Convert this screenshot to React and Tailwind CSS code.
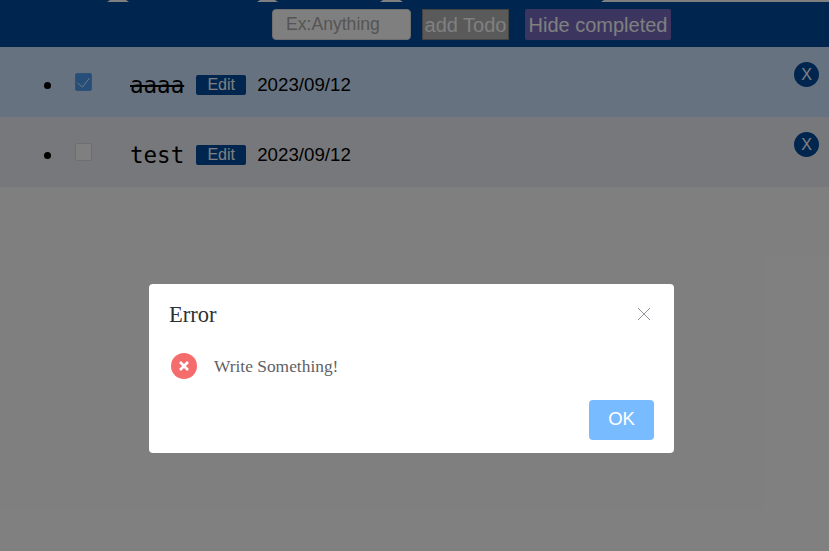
const todos = [
  { id: 1, title: "aaaa", done: true, date: "2023/09/12", row: "bg-[#cce4ff]" },
  { id: 2, title: "test", done: false, date: "2023/09/12", row: "bg-[#eef1f6]" },
];

function CheckIcon() {
  return (
    <svg width="14" height="14" viewBox="0 0 14 14" fill="none" stroke="white" strokeOpacity="0.8" strokeWidth="1">
      <path d="M0.5 8 L5.5 12 L12.5 3" />
    </svg>
  );
}

export default function App() {
  return (
    <div className="relative h-[551px] w-[829px] overflow-hidden bg-white font-['Liberation_Sans',sans-serif]">
      <div className="relative flex h-[47px] items-start justify-center gap-[11px] bg-[#004c9e] pl-[114px] pt-[9px]">
        <svg width="829" height="3" viewBox="0 0 829 3" fill="white" className="absolute left-0 top-0">
          <polygon points="110,0 126,0 129,2 107,2" />
          <polygon points="260,0 275,0 278,2 257,2" />
          <polygon points="383,0 400,0 403,2 380,2" />
          <polygon points="604,0 829,0 829,2 601,2" />
        </svg>
        <input
          placeholder="Ex:Anything"
          className="h-[31px] w-[139px] rounded-[4px] border border-[#ddd] bg-white px-[13px] text-[17.6px] placeholder:text-[#aaa]"
        />
        <div className="flex gap-4">
          <button className="h-[31px] w-[87px] border border-[#888] bg-[#b4b4b4] text-[20px] text-white">add Todo</button>
          <button className="h-[31px] w-[146px] rounded-[2px] bg-[#766ac0] text-[20px] text-white">Hide completed</button>
        </div>
      </div>
      <ul>
        {todos.map((todo) => (
          <li key={todo.id} className={`relative flex h-[70px] items-center pl-[44px] pt-[6px] ${todo.row}`}>
            <span className="mr-[24px] h-[7px] w-[7px] rounded-full bg-black" />
            <span className={`-mt-[6px] flex h-[18px] w-[17px] items-center justify-center rounded-[2px] border ${todo.done ? "border-[#5ea4f0] bg-[#4f9cf2]" : "border-[#ddd] bg-white"}`}>
              {todo.done && <CheckIcon />}
            </span>
            <span className={`ml-[38px] font-['DejaVu_Sans_Mono',monospace] text-[22.5px] leading-none ${todo.done ? "line-through" : ""}`}>{todo.title}</span>
            <button className="ml-[12px] h-5 w-[50px] rounded-[2px] bg-[#004c9e] pb-[1px] text-[16px] leading-none text-white">Edit</button>
            <span className="ml-[11px] text-[18.72px]">{todo.date}</span>
            <button className="absolute right-[10px] top-[15px] h-[25px] w-[25px] rounded-full bg-[#004c9e] text-[16px] text-white">X</button>
          </li>
        ))}
      </ul>

      <div className="absolute inset-0 flex items-start justify-center bg-black/50">
        <div className="ml-[-6px] mt-[284px] h-[169px] w-[525px] rounded-[4px] bg-white pl-5 pr-5 pt-[15px] font-['Liberation_Serif',serif]">
          <div className="flex items-center justify-between">
            <span className="text-[22.5px] leading-[32px] text-[#303133]">Error</span>
            <svg width="14" height="14" viewBox="0 0 14 14" stroke="#909399" strokeWidth="1" className="-mt-[2px] mr-[3px]">
              <path d="M1 1 L13 13 M13 1 L1 13" />
            </svg>
          </div>
          <div className="mt-[22px] flex items-center pl-[2px]">
            <svg width="26" height="26" viewBox="0 0 26 26">
              <circle cx="13" cy="13" r="13" fill="#f56c6c" />
              <path d="M9 9 L17 17 M17 9 L9 17" stroke="white" strokeWidth="2.6" />
            </svg>
            <span className="ml-[17px] text-[17.4px] text-[#606266]">Write Something!</span>
          </div>
          <div className="mt-[21px] flex justify-end">
            <button className="h-10 w-[65px] rounded-[4px] bg-[#79bbff] pb-[3px] font-['Liberation_Sans',sans-serif] text-[18.5px] text-white">OK</button>
          </div>
        </div>
      </div>
    </div>
  );
}
